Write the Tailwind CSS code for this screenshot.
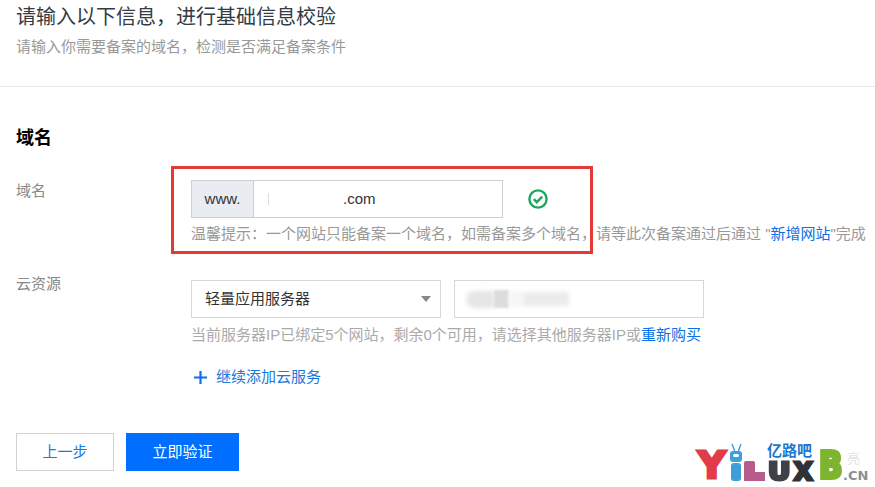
<!doctype html>
<html lang="zh-CN">
  <head>
    <meta charset="utf-8">
    <title>基础信息校验</title>
    <script src="https://cdn.jsdelivr.net/npm/@tailwindcss/browser@4"></script>
  </head>
  <body class="relative w-[875px] h-[487px] overflow-hidden bg-white font-['Liberation_Sans','Noto_Sans_CJK_SC',sans-serif]">
    <!-- header -->
    <header class="h-[87px] border-b border-[#e8e8e8] px-4">
      <h1 class="pt-[3px] text-[20px] leading-[28px] text-[#333b45]">请输入以下信息，进行基础信息校验</h1>
      <p class="mt-[5px] text-[15px] leading-[22px] text-[#999]">请输入你需要备案的域名，检测是否满足备案条件</p>
    </header>

    <main class="px-4">
      <h2 class="mt-[38px] text-[18px] leading-[26px] font-bold text-black">域名</h2>

      <!-- domain row -->
      <div class="mt-[29px] flex">
        <label class="w-[175px] shrink-0 pt-[1px] text-[15px] leading-[20px] text-[#888]">域名</label>
        <div>
          <div class="flex items-center">
            <div class="flex h-[38px] w-[312px] border border-[#ccd0d6]">
              <span class="flex w-[62px] items-center justify-center border-r border-[#ccd0d6] bg-[#e9ecf1] text-[15px] text-[#333]">www.</span>
              <span class="flex flex-1 items-center pl-[14px] text-[15px] text-[#333]">
                <span class="mr-[74px] h-[12px] w-[1px] bg-[#ddd]"></span>.com
              </span>
            </div>
            <svg class="ml-[25px]" width="20" height="20" viewBox="0 0 20 20" fill="none" stroke="#1aa860" stroke-width="2.4">
              <circle cx="10" cy="10" r="8.6"/>
              <path d="M5.8 10.2l3 3 5.4-5.6"/>
            </svg>
          </div>
          <p class="mt-[6px] whitespace-nowrap text-[15px] leading-[20px] text-[#999]">温馨提示：一个网站只能备案一个域名，如需备案多个域名，请等此次备案通过后通过 "<a class="text-[#0a6fe8]">新增网站</a>"完成</p>
        </div>
      </div>

      <!-- cloud resource row -->
      <div class="mt-[36px] flex">
        <label class="w-[175px] shrink-0 -mt-[6px] text-[15px] leading-[20px] text-[#888]">云资源</label>
        <div>
          <div class="flex gap-[13px]">
            <div class="flex h-[38px] w-[250px] items-center justify-between border border-[#d5d7da] pl-[13px] pr-[9px] text-[15px] text-[#333]">
              <span>轻量应用服务器</span>
              <span class="h-0 w-0 border-x-[5px] border-t-[6px] border-x-transparent border-t-[#888]"></span>
            </div>
            <div class="flex h-[38px] w-[250px] items-center border border-[#d5d7da] pl-[11px]">
              <span class="h-[17px] w-[28px] rounded-l-full bg-[#e6e6e6] blur-[2px]"></span>
              <span class="h-[18px] w-[15px] bg-[#dcdcdc] blur-[1px]"></span>
              <span class="h-[16px] w-[14px] bg-[#f6f6f6] blur-[2px]"></span>
              <span class="h-[14px] w-[46px] bg-[#ebebeb] blur-[2px]"></span>
            </div>
          </div>
          <p class="mt-[7px] whitespace-nowrap text-[15px] leading-[20px] text-[#aaa]">当前服务器IP已绑定5个网站，剩余0个可用，请选择其他服务器IP或<a class="text-[#0a6fe8]">重新购买</a></p>
          <div class="mt-[22px] flex items-center text-[15px] leading-[20px] text-[#1a78dc]">
            <svg class="ml-[3px] mr-[9px]" width="13" height="13" viewBox="0 0 13 13" fill="#0a6fe8"><path d="M5.4 0h2.2v5.4H13v2.2H7.6V13H5.4V7.6H0V5.4h5.4z"/></svg>
            继续添加云服务
          </div>
        </div>
      </div>

      <!-- actions -->
      <div class="mt-[46px] flex gap-3">
        <button class="h-[38px] w-[98px] border border-[#d0d3d8] bg-white text-[15px] text-[#1a78dc]">上一步</button>
        <button class="h-[38px] w-[113px] bg-[#006eff] text-[15px] text-white">立即验证</button>
      </div>
    </main>

    <!-- red annotation box over the form -->
    <div class="absolute left-[171px] top-[166px] h-[88px] w-[422px] border-[3px] border-[#e53935]"></div>

    <!-- watermark logo, a free-standing mark over the page corner -->
    <div class="absolute left-[697px] top-[449px] h-[33px] w-[178px] font-['DejaVu_Sans',sans-serif] font-bold">
      <span class="absolute left-[1px] top-0 text-[38px] leading-[32px] text-[#e23b4a] [-webkit-text-stroke:3px_#e23b4a]">Y</span>
      <span class="absolute left-[33px] top-[2px] h-[11px] w-[12px] rounded-[3px] bg-[#3f9fd8]"></span>
      <span class="absolute left-[36px] top-[5px] h-[3px] w-[6px] rounded-full bg-white"></span>
      <span class="absolute left-[34px] top-[14px] h-[18px] w-[10px] rounded-[3px] bg-[#3f9fd8]"></span>
      <span class="absolute left-[47px] top-[12px] h-[20px] w-[11px] rounded-t-[2px] bg-[#b85a8c]"></span>
      <span class="absolute left-[47px] top-[23px] h-[9px] w-[21px] bg-[#b85a8c]"></span>
      <span class="absolute left-[71px] top-[14px] origin-left scale-x-[1.15] text-[24px] leading-[19px] text-[#3d4248] [-webkit-text-stroke:3px_#3d4248]">U</span>
      <span class="absolute left-[97px] top-[14px] text-[24px] leading-[19px] text-[#2f3338] [-webkit-text-stroke:3px_#2f3338]">X</span>
      <span class="absolute left-[122px] top-[2px] origin-top-left scale-x-[1.1] scale-y-[1.3] text-[28px] leading-[23px] text-[#7db52e] [-webkit-text-stroke:3px_#7db52e]">B</span>
    </div>
    <svg class="absolute left-[729px] top-[443px]" width="15" height="9" viewBox="0 0 15 9" fill="none" stroke="#3f9fd8" stroke-width="1.4"><path d="M6 9L3 1M9 9l3-8"/></svg>
    <div class="absolute left-[767px] top-[442px] font-['Noto_Sans_CJK_SC',sans-serif] text-[15px] leading-[16px] font-bold text-[#1a78d0]">亿路吧</div>
    <div class="absolute left-[847px] top-[451px] font-['Noto_Sans_CJK_SC',sans-serif] text-[13px] leading-[13px] text-[#e2e2e2]">亮</div>
    <div class="absolute left-[843px] top-[469px] font-['DejaVu_Sans',sans-serif] text-[13px] leading-[13px] font-bold text-[#8a8f94]">.CN</div>
  </body>
</html>
